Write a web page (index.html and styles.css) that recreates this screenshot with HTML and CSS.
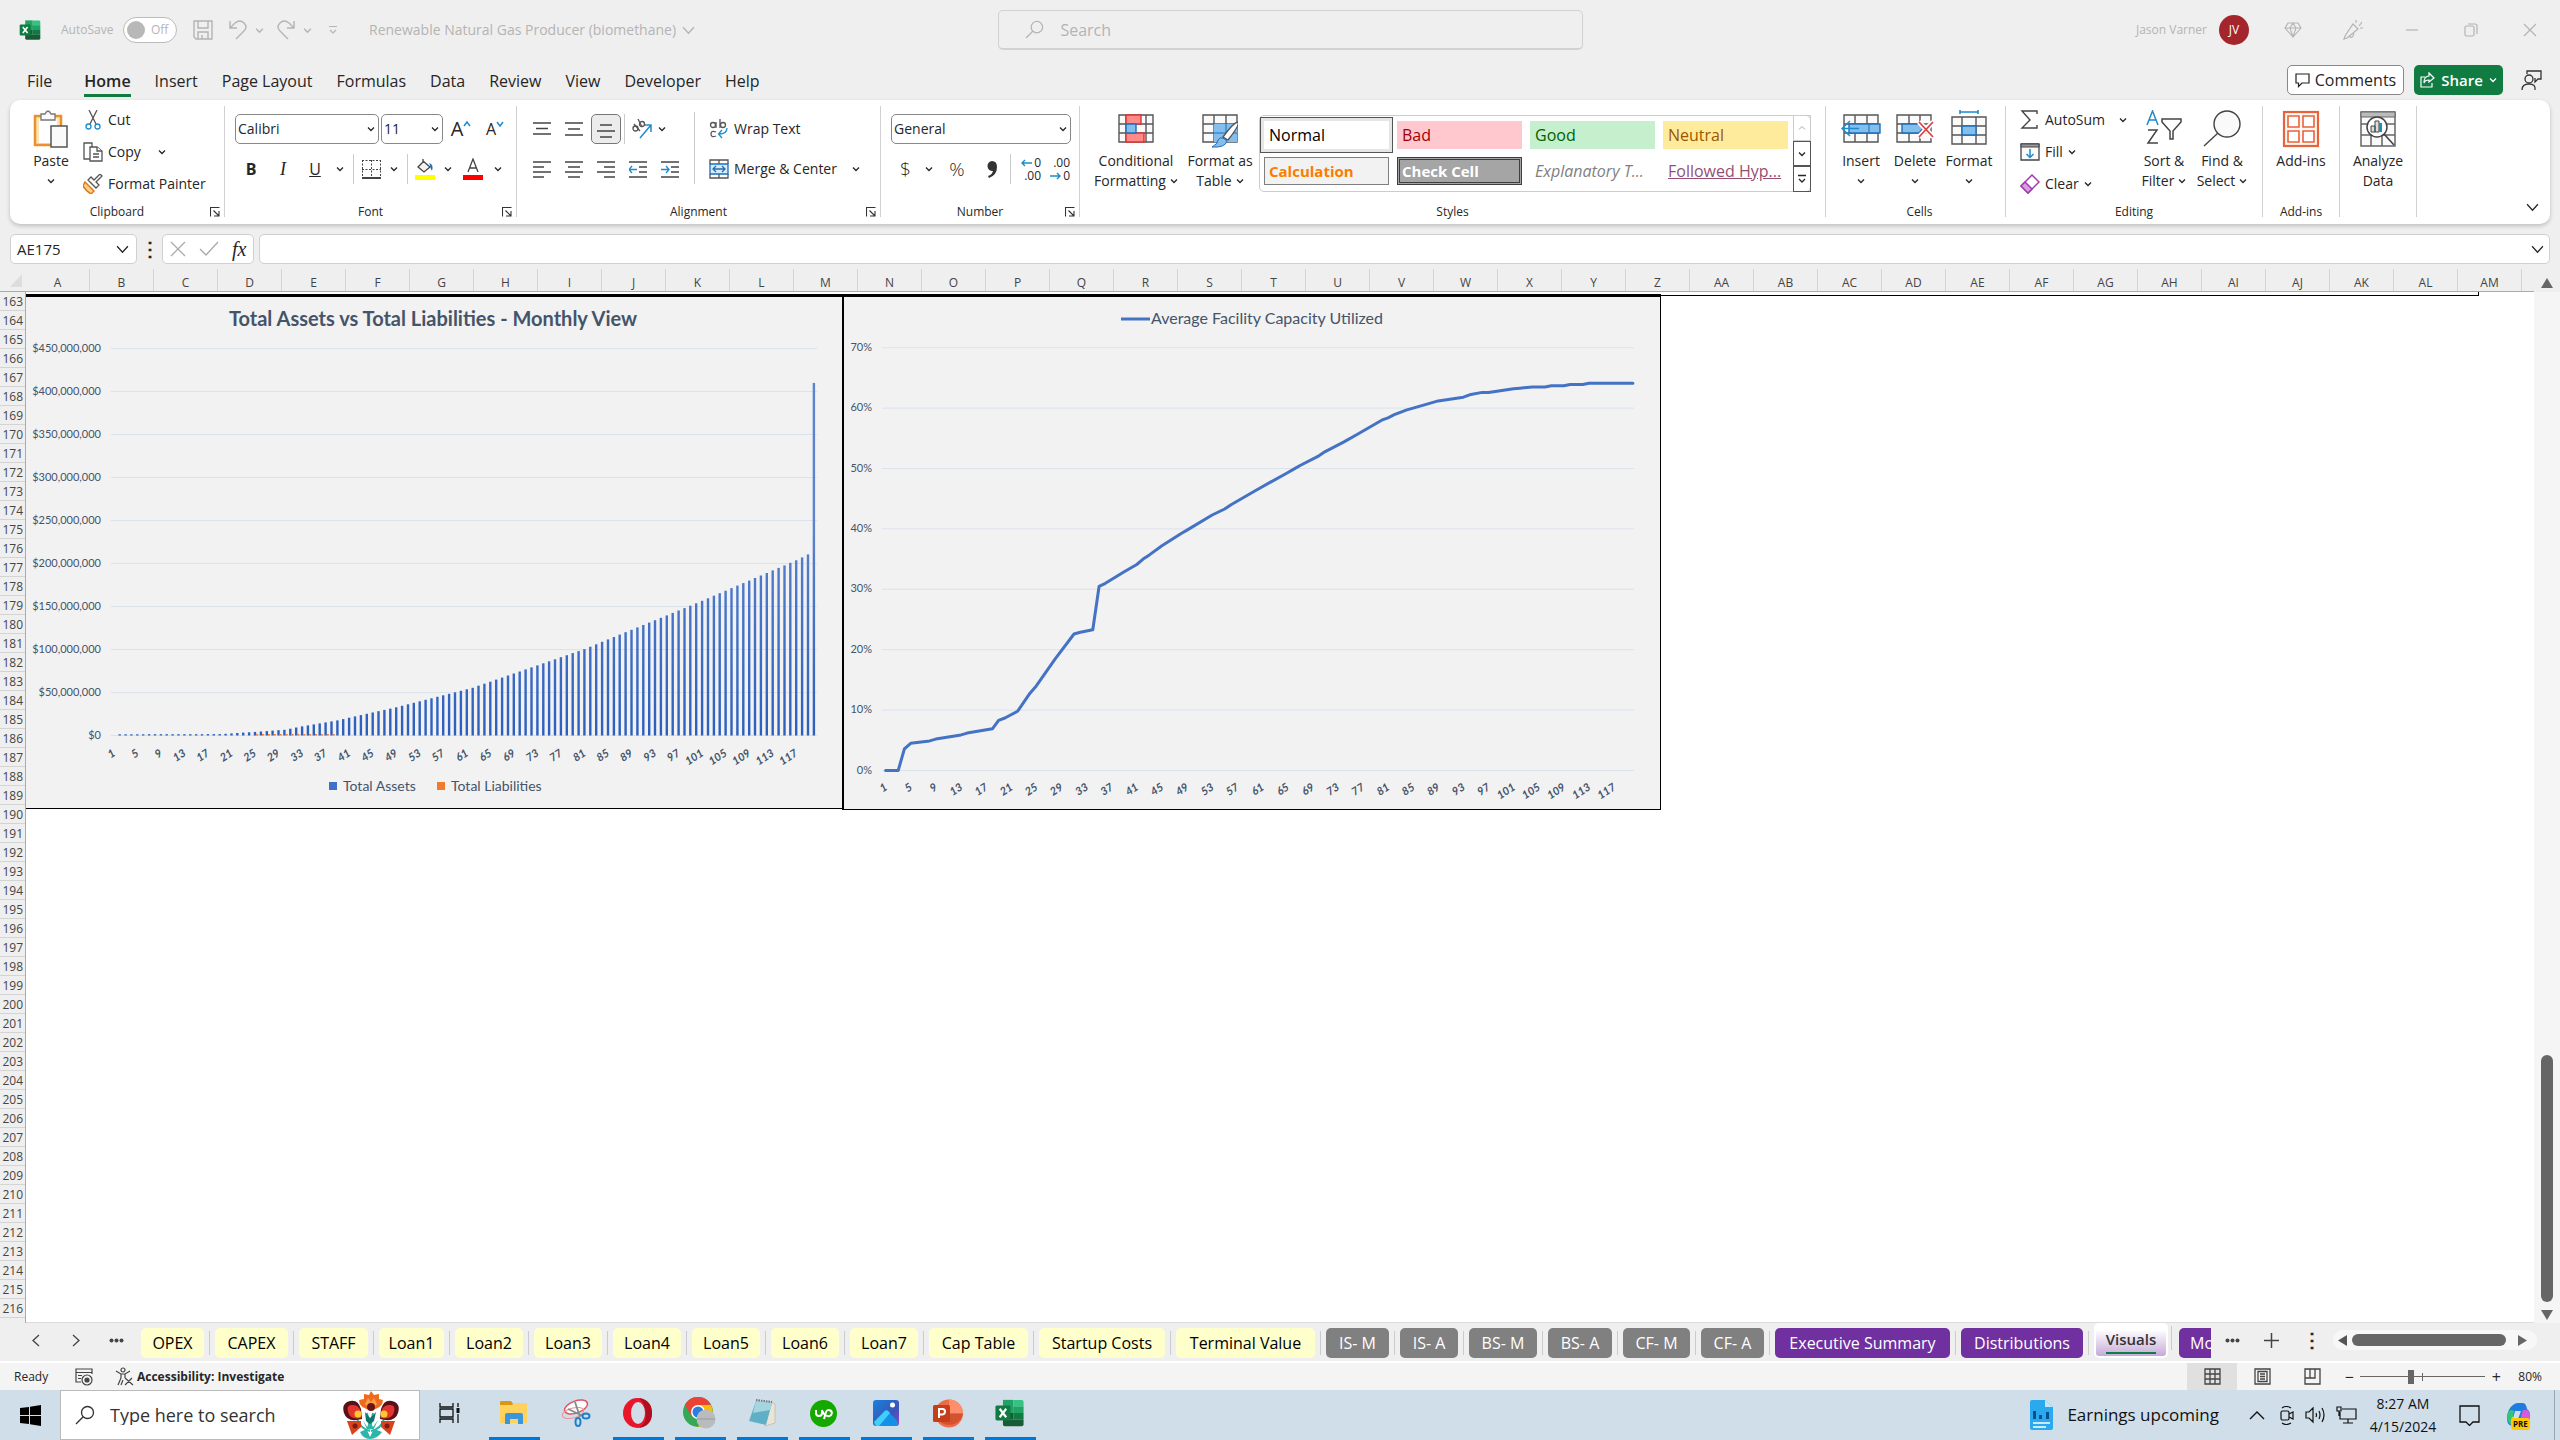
FILE: index.html
```html
<!DOCTYPE html>
<html lang="en">
<head>
<meta charset="utf-8">
<title>Renewable Natural Gas Producer (biomethane) - Excel</title>
<link rel="stylesheet" href="styles.css">
</head>
<body>
<svg class="defs" aria-hidden="true">
  <defs>
    <symbol id="chev" viewBox="0 0 8 8"><path d="M1 2.5 4 5.5 7 2.5" fill="none" stroke="currentColor" stroke-width="1.3"/></symbol>
    <symbol id="chev-l" viewBox="0 0 12 12"><path d="M1 3 6 8.500 11 3" fill="none" stroke="currentColor" stroke-width="1.2"/></symbol>
    <symbol id="launch" viewBox="0 0 10 10"><path d="M.5 9.500V.5H9.500M3.500 3.500 8.500 8.500M9 4V9H4" fill="none" stroke="#333" stroke-width="1.100"/></symbol>
    <symbol id="glass" viewBox="0 0 20 20"><circle cx="12.500" cy="7.500" r="6" fill="none" stroke="currentColor" stroke-width="1.300"/><path d="M8.200 11.800 1 19" stroke="currentColor" stroke-width="1.300"/></symbol>
    <symbol id="excel" viewBox="0 0 32 32">
      <path d="M9 2H20V16H9Z" fill="#21a366"/><path d="M20 2H29Q31 2 31 4V9H20Z" fill="#33c481"/><path d="M9 9H20V16H9Z" fill="#21a366"/><path d="M20 9H31V16H20Z" fill="#21a366"/><path d="M9 16H20V23H9Z" fill="#185c37"/><path d="M20 16H31V23H20Z" fill="#107c41"/><path d="M9 23H31V28Q31 30 29 30H11Q9 30 9 28Z" fill="#185c37"/>
      <rect x="1" y="8" width="16" height="16" rx="1.500" fill="#107c41"/><path d="M5.500 11.500 12.500 20.500M12.500 11.500 5.500 20.500" stroke="#fff" stroke-width="2.300"/>
    </symbol>
  </defs>
</svg>

<header class="titlebar">
  <svg class="app-icon"><use href="#excel"/></svg>
  <label class="autosave" for="autosave">AutoSave</label>
  <span class="toggle"><input type="checkbox" id="autosave"><span>Off</span></span>
  <button class="tb save" aria-label="Save"><svg width="20" height="20" viewBox="0 0 20 20" fill="none" stroke="currentColor" stroke-width="1.400"><path d="M1 1H19V19H3L1 17ZM5 1V8H15V1M5 19V12H15V19M9 15V19"/></svg></button>
  <button class="tb undo" aria-label="Undo"><svg width="20" height="20" viewBox="0 0 20 20" fill="none" stroke="currentColor" stroke-width="1.400"><path d="M2 1V8H9M2 8 7 3Q12-1 16 3T16 11L8 19"/></svg></button>
  <button class="tb tiny" aria-label="Undo list"><svg width="9" height="9"><use href="#chev"/></svg></button>
  <button class="tb undo redo" aria-label="Redo"><svg width="20" height="20" viewBox="0 0 20 20" fill="none" stroke="currentColor" stroke-width="1.400"><path d="M18 1V8H11M18 8 13 3Q8-1 4 3T4 11L12 19"/></svg></button>
  <button class="tb tiny" aria-label="Redo list"><svg width="9" height="9"><use href="#chev"/></svg></button>
  <button class="tb custom" aria-label="Customize toolbar"><svg width="10" height="10" viewBox="0 0 10 10" fill="none" stroke="currentColor" stroke-width="1.200"><path d="M1 1.500H9M2 5 5 8 8 5"/></svg></button>
  <button class="tb doc">Renewable Natural Gas Producer (biomethane) <svg width="13" height="13"><use href="#chev-l"/></svg></button>
  <label class="search"><svg width="19" height="19"><use href="#glass"/></svg><input type="text" placeholder="Search" aria-label="Search"></label>
  <div class="account">
    <span>Jason Varner</span><span class="avatar">JV</span>
    <button class="tb win" aria-label="Premium"><svg width="18" height="18" viewBox="0 0 18 18" fill="none" stroke="currentColor" stroke-width="1.100"><path d="M4 2H14L17 7 9 16 1 7ZM1 7H17M6 7 9 2 12 7 9 16Z"/></svg></button>
    <button class="tb win" aria-label="Coming soon"><svg width="20" height="20" viewBox="0 0 20 20" fill="none" stroke="currentColor" stroke-width="1.200"><path d="M10 4 15 9 4 18 1 19 2 16ZM6 16Q10 20 11 12M13 3V0M16 6 19 2M17 8H20"/></svg></button>
    <button class="tb win" aria-label="Minimize"><svg width="14" height="14" viewBox="0 0 14 14" fill="none" stroke="currentColor" stroke-width="1.200"><path d="M1 7H13"/></svg></button>
    <button class="tb win" aria-label="Restore"><svg width="14" height="14" viewBox="0 0 14 14" fill="none" stroke="currentColor" stroke-width="1.200"><rect x="1" y="3" width="9" height="10" rx="1.500"/><path d="M4 1H11Q13 1 13 3V11"/></svg></button>
    <button class="tb win" aria-label="Close"><svg width="14" height="14" viewBox="0 0 14 14" fill="none" stroke="currentColor" stroke-width="1.200"><path d="M1 1 13 13M13 1 1 13"/></svg></button>
  </div>
</header>

<nav class="menu">
  <a href="#file">File</a><a href="#home" class="on">Home</a><a href="#insert">Insert</a><a href="#layout">Page Layout</a><a href="#formulas">Formulas</a><a href="#data">Data</a><a href="#review">Review</a><a href="#view">View</a><a href="#developer">Developer</a><a href="#help">Help</a>
  <div class="menu-right">
    <button class="comments"><svg width="15" height="15" viewBox="0 0 15 15" fill="none" stroke="#222" stroke-width="1.200"><path d="M1 1H14V10H7L3.500 13.500V10H1Z"/></svg>Comments</button>
    <button class="share"><svg width="15" height="16" viewBox="0 0 15 16" fill="none" stroke="#fff" stroke-width="1.200"><path d="M5 5H1V15H12V11M9 1 14 6 9 10V8Q5 8 4 11Q4 4 9 4Z"/></svg>Share<svg width="8" height="8"><use href="#chev"/></svg></button>
    <button class="people" aria-label="Presence"><svg width="21" height="21" viewBox="0 0 21 21" fill="none" stroke="#333" stroke-width="1.300"><circle cx="8" cy="9" r="4"/><path d="M1 20Q1 14 8 14T14 20M6 4V1H20V9H17L14 12V8"/></svg></button>
  </div>
</nav>

<section class="ribbon">
  <div class="group clipboard">
    <div class="body">
      <button class="big paste"><svg width="36" height="38" viewBox="0 0 36 38"><rect x="2" y="6" width="26" height="29" fill="#fbe3b3" stroke="#e8912d" stroke-width="2.500"/><rect x="6" y="9" width="18" height="24" fill="#fff"/><path d="M8 4H12Q15-2 18 4H22V10H8Z" fill="#fafafa" stroke="#777" stroke-width="1.300"/><rect x="18" y="16" width="16" height="21" fill="#fafafa" stroke="#555" stroke-width="1.500"/></svg><span>Paste</span><svg class="c"><use href="#chev"/></svg></button>
      <div class="stack">
        <button><svg width="20" height="20" viewBox="0 0 20 20" fill="none" stroke="#555" stroke-width="1.300"><path d="M6 0 13 14M14 0 7 14"/><g stroke="#1e8bcd"><circle cx="5.500" cy="16.500" r="2.500"/><circle cx="14.500" cy="16.500" r="2.500"/></g></svg>Cut</button>
        <button><svg width="20" height="20" viewBox="0 0 20 20" fill="#fff" stroke="#555" stroke-width="1.300"><path d="M9 17H1V1H9V5"/><path d="M7 5H14L19 9V19H7Z"/><path d="M14 5V9H19M10 12H16M10 15H16"/></svg>Copy<svg class="c gap"><use href="#chev"/></svg></button>
        <button><svg width="20" height="20" viewBox="0 0 20 20"><path d="M2 8 11 17 8 20Q3 17 0 12Z" fill="#fbd28a" stroke="#e07b1a" stroke-width="1.500"/><path d="M5 6 13 14 16 11 13 8 19 2 17 0 11 6 8 3Z" fill="#fff" stroke="#555" stroke-width="1.300"/></svg>Format Painter</button>
      </div>
    </div>
    <div class="label">Clipboard<svg class="l"><use href="#launch"/></svg></div>
  </div>

  <div class="group font">
    <div class="rows">
      <div class="row"><button class="combo name">Calibri<svg class="c"><use href="#chev"/></svg></button><button class="combo size">11<svg class="c"><use href="#chev"/></svg></button><button class="t a1">A<svg width="8" height="8" viewBox="0 0 8 8"><path d="M1 6 4 2 7 6" fill="none" stroke="#1e8bcd" stroke-width="1.500"/></svg></button><button class="t a2">A<svg width="8" height="8" viewBox="0 0 8 8"><path d="M1 2 4 6 7 2" fill="none" stroke="#1e8bcd" stroke-width="1.500"/></svg></button></div>
      <div class="row"><button class="t"><b>B</b></button><button class="t"><i class="it">I</i></button><button class="t"><u>U</u></button><svg class="c w18"><use href="#chev"/></svg><span class="sep"></span>
        <button class="t n"><svg width="19" height="19" viewBox="0 0 19 19" fill="none" stroke="#444"><path d="M.5 0V18M9.500 0V18M18.500 0V18M0 .5H19M0 9.500H19" stroke-dasharray="2 1.500"/><path d="M0 18H19" stroke-width="2"/></svg></button><svg class="c w18"><use href="#chev"/></svg><span class="sep"></span>
        <button class="t n"><svg width="20" height="22" viewBox="0 0 20 22"><path d="M8 1V5M8 3 15 9 9 14 3 9 9 3" fill="#f4f4f4" stroke="#444" stroke-width="1.300"/><path d="M14 5Q19 6 17 13Q15 10 15 7Z" fill="#1e6fb8"/><rect y="17" width="20" height="5" fill="#ff0"/></svg></button><svg class="c w18"><use href="#chev"/></svg>
        <button class="t"><svg width="20" height="22" viewBox="0 0 20 22"><path d="M5 14 10 1 15 14M7 10H13" fill="none" stroke="#444" stroke-width="1.300"/><rect y="17" width="20" height="5" fill="#f00"/></svg></button><svg class="c w18"><use href="#chev"/></svg></div>
    </div>
    <div class="label">Font<svg class="l"><use href="#launch"/></svg></div>
  </div>

  <div class="group align">
    <div class="body">
      <div class="rows">
        <div class="row"><button class="t"><svg class="ln" viewBox="0 0 18 18"><path d="M0 3H18M3 8.500H15M0 14H18"/></svg></button><button class="t"><svg class="ln" viewBox="0 0 18 18"><path d="M0 3H18M3 9H15M0 15H18"/></svg></button><button class="t on"><svg class="ln" viewBox="0 0 18 18"><path d="M3 5H15M0 11H18M3 17H15"/></svg></button><span class="sep s4"></span><button class="t"><svg width="22" height="20" viewBox="0 0 22 20"><path d="M9 19 20 6M14 6H20V13" stroke="#1e8bcd" stroke-width="1.500" fill="none"/><g fill="none" stroke="#555" stroke-width="1.300"><circle cx="4.500" cy="9.500" r="2.500"/><path d="M3 5 9 12"/><circle cx="11" cy="5" r="2.500"/><path d="M7 0 11 8"/></g></svg></button><svg class="c"><use href="#chev"/></svg></div>
        <div class="row"><button class="t"><svg class="ln" viewBox="0 0 18 18"><path d="M0 2H18M0 7H11M0 12H18M0 17H11"/></svg></button><button class="t"><svg class="ln" viewBox="0 0 18 18"><path d="M0 2H18M3 7H15M0 12H18M3 17H15"/></svg></button><button class="t"><svg class="ln" viewBox="0 0 18 18"><path d="M0 2H18M7 7H18M0 12H18M7 17H18"/></svg></button><span class="sep s4"></span><button class="t"><svg class="ln" viewBox="0 0 18 18"><path d="M0 2H18M10 7H18M10 12H18M0 17H18"/><path d="M8 9.500H0M3 6 0 9.500 3 13" stroke="#1e8bcd"/></svg></button><button class="t"><svg class="ln" viewBox="0 0 18 18"><path d="M0 2H18M10 7H18M10 12H18M0 17H18"/><path d="M0 9.500H8M5 6 8 9.500 5 13" stroke="#1e8bcd"/></svg></button></div>
      </div>
      <div class="rows wrapcol">
        <div class="row"><button class="txt"><svg width="20" height="20" viewBox="0 0 20 20" fill="none" stroke="#555" stroke-width="1.300"><circle cx="4" cy="6" r="2.500"/><path d="M7 3V9M11 0V9"/><circle cx="14" cy="6" r="2.500"/><path d="M7 13Q2 11 2 15T7 17"/><path d="M18 9Q18 15 10 15M13 11 9.500 15 13 19" stroke="#1e8bcd"/></svg>Wrap Text</button></div>
        <div class="row"><button class="txt"><svg width="20" height="20" viewBox="0 0 20 20" fill="none" stroke="#555" stroke-width="1.300"><path d="M1 5V1H19V5M10 1V5M1 15V19H19V15M10 15V19"/><path d="M1 5H19V15H1Z" fill="#d8ebf9" stroke="#1e6fb8"/><path d="M4 10H16M7 7 4 10 7 13M13 7 16 10 13 13" stroke="#1e6fb8"/></svg>Merge &amp; Center<svg class="c mg"><use href="#chev"/></svg></button></div>
      </div>
    </div>
    <div class="label">Alignment<svg class="l"><use href="#launch"/></svg></div>
  </div>

  <div class="group number">
    <div class="rows">
      <div class="row"><button class="combo fmt">General<svg class="c"><use href="#chev"/></svg></button></div>
      <div class="row"><button class="t sym">$</button><svg class="c w18"><use href="#chev"/></svg><button class="t sym pc">%</button><button class="t"><svg width="12" height="17" viewBox="0 0 12 17"><path d="M6 0A5 5 0 1 0 7 10Q6 14 2 15L3 17Q11 14 11 6 11 0 6 0Z" fill="#333"/></svg></button><span class="sep s4"></span><button class="t dec"><span><svg class="ar" viewBox="0 0 11 8"><path d="M11 4H1M4 1 1 4 4 7"/></svg>0</span><span>.00</span></button><button class="t dec"><span>.00</span><span><svg class="ar" viewBox="0 0 11 8"><path d="M0 4H10M7 1 10 4 7 7"/></svg>0</span></button></div>
    </div>
    <div class="label">Number<svg class="l"><use href="#launch"/></svg></div>
  </div>

  <div class="group styles">
    <div class="body">
      <button class="big cf"><svg width="36" height="38" viewBox="0 0 36 38"><path d="M1 5H35V32H1Z M1 14H35M1 23H35M8 5V32M28 5V32" fill="#fafafa" stroke="#555" stroke-width="1.400"/><g stroke="#d33" fill="#ff8a8a" stroke-width="1.400"><path d="M8 5H23V14H8ZM8 23H26V32H8Z"/></g><path d="M8 14H18V23H8Z" fill="#83beec" stroke="#1e6fb8" stroke-width="1.400"/></svg><span>Conditional</span><span>Formatting <svg class="c"><use href="#chev"/></svg></span></button>
      <button class="big ft"><svg width="36" height="38" viewBox="0 0 36 38"><path d="M1 5H35V32H1Z M1 14H35M1 23H35M12 5V32M24 5V32" fill="#fafafa" stroke="#555" stroke-width="1.400"/><path d="M12 14H35V32H12Z" fill="#83beec"/><path d="M24 14V32M12 23H35" stroke="#1e6fb8"/><path d="M36 12Q38 15 26 30L21 27Q31 13 36 12Z" fill="#fff" stroke="#555" stroke-width="1.300"/><path d="M21 28 25 31Q23 38 10 37 16 34 16 30 18 27 21 28Z" fill="#83beec" stroke="#1e6fb8"/></svg><span>Format as</span><span>Table <svg class="c"><use href="#chev"/></svg></span></button>
      <div class="gallery">
        <div class="cells">
          <button class="st normal">Normal</button><button class="st bad">Bad</button><button class="st good">Good</button><button class="st neutral">Neutral</button>
          <button class="st calc">Calculation</button><button class="st check">Check Cell</button><button class="st expl">Explanatory T...</button><button class="st foll">Followed Hyp...</button>
        </div>
        <div class="scroll">
          <button class="off" aria-label="Up"><svg width="8" height="8" viewBox="0 0 8 8"><path d="M1 5.500 4 2.500 7 5.500" fill="none" stroke="currentColor"/></svg></button>
          <button aria-label="Down"><svg class="c"><use href="#chev"/></svg></button>
          <button aria-label="More"><svg width="8" height="10" viewBox="0 0 8 10"><path d="M0 1.500H8M1 5 4 8 7 5" fill="none" stroke="currentColor" stroke-width="1.300"/></svg></button>
        </div>
      </div>
    </div>
    <div class="label">Styles</div>
  </div>

  <div class="group cellsg">
    <div class="body">
      <button class="big"><svg width="40" height="38" viewBox="0 0 40 38"><path d="M3 5H37V32H3ZM3 14H37M3 23H37M14 5V32M26 5V32" fill="#fafafa" stroke="#555" stroke-width="1.400"/><path d="M8 14H39V23H8Z" fill="#83beec" stroke="#1e6fb8" stroke-width="1.400"/><path d="M18 18.500H2M9 11 1 18.500 9 26" fill="none" stroke="#1e8bcd" stroke-width="1.500"/><path d="M28 14V23" stroke="#1e6fb8"/></svg><span>Insert</span><svg class="c"><use href="#chev"/></svg></button>
      <button class="big"><svg width="40" height="38" viewBox="0 0 40 38"><path d="M2 5H36V32H2ZM2 14H36M2 23H36M14 5V32M25 5V32" fill="#fafafa" stroke="#555" stroke-width="1.400"/><path d="M7 14H24L28 18.500 24 23H7Z" fill="#83beec" stroke="#1e6fb8" stroke-width="1.400"/><path d="M24 12 38 27M38 12 24 27" stroke="#fff" stroke-width="5"/><path d="M24 12 38 27M38 12 24 27" stroke="#e04040" stroke-width="1.800"/></svg><span>Delete</span><svg class="c"><use href="#chev"/></svg></button>
      <button class="big"><svg width="40" height="38" viewBox="0 0 40 38"><path d="M3 7H37V34H3ZM3 16H37M3 25H37M13 7V34M27 7V34" fill="#fafafa" stroke="#555" stroke-width="1.400"/><path d="M13 16H27V25H13Z" fill="#83beec" stroke="#1e6fb8" stroke-width="1.400"/><path d="M11 2H29M11 0V4M29 0V4" stroke="#1e8bcd" stroke-width="1.600"/></svg><span>Format</span><svg class="c"><use href="#chev"/></svg></button>
    </div>
    <div class="label">Cells</div>
  </div>

  <div class="group editing">
    <div class="body">
      <div class="stack">
        <button><svg width="20" height="20" viewBox="0 0 20 20" fill="none" stroke="#444" stroke-width="1.400"><path d="M17 4V1H2L10 10 2 18H17V15"/></svg>AutoSum<svg class="c as"><use href="#chev"/></svg></button>
        <button><svg width="20" height="20" viewBox="0 0 20 20"><path d="M1 2H19V18H1Z" fill="#fafafa" stroke="#444" stroke-width="1.300"/><path d="M1 2H19V5H1Z" fill="#999" stroke="#444"/><path d="M10 7V15M6.500 12 10 15.500 13.500 12" fill="none" stroke="#1e8bcd" stroke-width="1.500"/></svg>Fill<svg class="c"><use href="#chev"/></svg></button>
        <button><svg width="20" height="20" viewBox="0 0 20 20"><path d="M12 1 19 8 8 19 1 12Z" fill="#fff" stroke="#a03bb0" stroke-width="1.500"/><path d="M5 8 12 15 8 19 1 12Z" fill="#d9a0e0" stroke="#a03bb0" stroke-width="1.500"/></svg>Clear<svg class="c"><use href="#chev"/></svg></button>
      </div>
      <button class="big sf"><svg width="38" height="38" viewBox="0 0 38 38" fill="none" stroke-width="1.500"><path d="M2 15 7.500 1 13 15M4 10H11" stroke="#1e8bcd"/><path d="M3 20H12L3 33H13M17 9H36V12L28 21V29H25V21L17 12Z" stroke="#444"/></svg><span>Sort &amp;</span><span>Filter <svg class="c"><use href="#chev"/></svg></span></button>
      <button class="big fs"><svg width="38" height="38" viewBox="0 0 38 38"><circle cx="24" cy="14" r="13" fill="#fafafa" stroke="#444" stroke-width="1.400"/><path d="M15 23 1 36" stroke="#444" stroke-width="1.400"/></svg><span>Find &amp;</span><span>Select <svg class="c"><use href="#chev"/></svg></span></button>
    </div>
    <div class="label">Editing</div>
  </div>

  <div class="group addins">
    <div class="body"><button class="big"><svg width="38" height="38" viewBox="0 0 38 38" fill="#fff" stroke="#e8633a"><rect x="2" y="2" width="34" height="34" stroke-width="2.200" fill="#fff7f3"/><path d="M6 6H17V17H6ZM21 6H32V17H21ZM6 21H17V32H6ZM21 21H32V32H21Z" stroke-width="1.600"/></svg><span>Add-ins</span></button></div>
    <div class="label">Add-ins</div>
  </div>

  <div class="group analyze">
    <div class="body"><button class="big"><svg width="38" height="38" viewBox="0 0 38 38"><path d="M2 2H36V36H2ZM2 14H36M2 25H36M12 25V36M23 25V36" fill="#fafafa" stroke="#666" stroke-width="1.500"/><path d="M2 2H36V7H2Z" fill="#bbb" stroke="#666"/><circle cx="18" cy="17" r="10" fill="#fff" stroke="#444" stroke-width="1.500"/><path d="M25 24 35 35" stroke="#444" stroke-width="1.600"/><path d="M12 16H16V22H12ZM16 11H20V22H16Z" fill="#ddd" stroke="#444"/><path d="M20 13H23V22H20Z" fill="#1e8bcd"/></svg><span>Analyze</span><span>Data</span></button></div>
    <div class="label"></div>
  </div>
  <button class="collapse" aria-label="Collapse ribbon"><svg width="13" height="13"><use href="#chev-l"/></svg></button>
</section>

<section class="formula">
  <button class="namebox">AE175<svg width="13" height="13"><use href="#chev-l"/></svg></button>
  <span class="dots">⋮</span>
  <div class="fx">
    <button aria-label="Cancel"><svg width="16" height="16" viewBox="0 0 16 16" fill="none" stroke="#aaa" stroke-width="1.300"><path d="M1 1 15 15M15 1 1 15"/></svg></button>
    <button aria-label="Enter"><svg width="20" height="16" viewBox="0 0 20 16" fill="none" stroke="#aaa" stroke-width="1.300"><path d="M1 8 7 14 19 1"/></svg></button>
    <button class="f" aria-label="Insert function">fx</button>
  </div>
  <div class="fbox"><input type="text" aria-label="Formula bar"><svg width="13" height="13"><use href="#chev-l"/></svg></div>
</section>

<main class="sheet">
  <div class="corner"><svg width="12" height="13" viewBox="0 0 12 13"><path d="M12 0V13H0Z" fill="#ddd"/></svg></div>
  <div class="cols" id="cols"></div>
  <div class="vtop"><svg width="12" height="10" viewBox="0 0 12 10"><path d="M6 0 12 10H0Z" fill="#666"/></svg></div>
  <div class="rowheads" id="rows"></div>
  <div class="canvas">
    <figure class="chart assets"><svg id="assets" width="816" height="511" viewBox="0 5 816 511" role="img" aria-label="Total Assets vs Total Liabilities"></svg></figure>
    <figure class="chart capacity"><svg id="capacity" width="816" height="512" viewBox="2 5 816 512" role="img" aria-label="Average Facility Capacity Utilized"></svg></figure>
    <div class="edge"></div>
  </div>
  <div class="vbar"><span class="thumb"></span><svg width="12" height="10" viewBox="0 0 12 10"><path d="M6 10 12 0H0Z" fill="#666"/></svg></div>
</main>

<section class="tabs">
  <div class="tabnav"><button aria-label="Previous"><svg width="8" height="13" viewBox="0 0 8 13"><path d="M7 1 1 6.500 7 12" fill="none" stroke="#444" stroke-width="1.300"/></svg></button><button aria-label="Next"><svg width="8" height="13" viewBox="0 0 8 13"><path d="M1 1 7 6.500 1 12" fill="none" stroke="#444" stroke-width="1.300"/></svg></button><button aria-label="All sheets"><svg width="15" height="5" viewBox="0 0 15 5" fill="#444"><circle cx="2.500" cy="2.500" r="2"/><circle cx="7.500" cy="2.500" r="2"/><circle cx="12.500" cy="2.500" r="2"/></svg></button></div>
  <div class="strip">
    <button class="y">OPEX</button><button class="y">CAPEX</button><button class="y">STAFF</button><button class="y">Loan1</button><button class="y">Loan2</button><button class="y">Loan3</button><button class="y">Loan4</button><button class="y">Loan5</button><button class="y">Loan6</button><button class="y">Loan7</button><button class="y">Cap Table</button><button class="y">Startup Costs</button><button class="y">Terminal Value</button><button class="g">IS- M</button><button class="g">IS- A</button><button class="g">BS- M</button><button class="g">BS- A</button><button class="g">CF- M</button><button class="g">CF- A</button><button class="p">Executive Summary</button><button class="p">Distributions</button><button class="act"><span>Visuals</span></button><button class="p cut">Mo</button>
  </div>
  <div class="tabend">
    <button aria-label="More sheets"><svg width="15" height="5" viewBox="0 0 15 5" fill="#444"><circle cx="2.500" cy="2.500" r="2"/><circle cx="7.500" cy="2.500" r="2"/><circle cx="12.500" cy="2.500" r="2"/></svg></button>
    <button aria-label="New sheet"><svg width="15" height="15" viewBox="0 0 15 15"><path d="M7.500 0V15M0 7.500H15" stroke="#444" stroke-width="1.500"/></svg></button>
    <span class="dots">⋮</span>
    <div class="hbar"><svg width="9" height="11" viewBox="0 0 9 11"><path d="M9 0V11L0 5.500Z" fill="#555"/></svg><span></span><svg width="9" height="11" viewBox="0 0 9 11"><path d="M0 0V11L9 5.500Z" fill="#666"/></svg></div>
  </div>
</section>

<section class="status">
  <span class="ready">Ready</span>
  <svg width="18" height="18" viewBox="0 0 18 18" fill="none" stroke="#444" stroke-width="1.200"><path d="M6 14H1V1H17V6M1 4.500H17M3 7.500H7M3 10.500H6"/><circle cx="12" cy="12" r="5"/><circle cx="12" cy="12" r="2" fill="#444"/></svg>
  <svg class="acc" width="19" height="19" viewBox="0 0 19 19" fill="none" stroke="#444" stroke-width="1.200"><circle cx="8" cy="3" r="2"/><path d="M1 4 6 7V11L3 18M15 4 10 7V11M6 7H10M6 18 8 13M10 11 18 18M17 11 10 18"/></svg>
  <b>Accessibility: Investigate</b>
  <div class="views">
    <button class="on" aria-label="Normal view"><svg width="17" height="17" viewBox="0 0 17 17" fill="none" stroke="#444" stroke-width="1.300"><path d="M1 1H16V16H1ZM1 6H16M1 11H16M6 1V16M11 1V16"/></svg></button>
    <button aria-label="Page layout"><svg width="17" height="17" viewBox="0 0 17 17" fill="none" stroke="#444" stroke-width="1.300"><path d="M1 1H16V16H1ZM4 3.500H13V13.500H4ZM6 6H11M6 8.500H11M6 11H11"/></svg></button>
    <button aria-label="Page break"><svg width="17" height="17" viewBox="0 0 17 17" fill="none" stroke="#444" stroke-width="1.300"><path d="M1 1H16V16H1ZM1 10H11V1M6 1V10"/></svg></button>
    <span class="pm">−</span><input class="zoom" type="range" min="0" max="100" value="40" aria-label="Zoom"><span class="pm">+</span><span class="pct">80%</span>
  </div>
</section>

<footer class="taskbar">
  <button class="start" aria-label="Start"><svg width="21" height="21" viewBox="0 0 21 21"><path d="M0 3 9 2V10H0ZM10 1.800 21 0V10H10ZM0 11H9V19L0 18ZM10 11H21V21L10 19.200Z"/></svg></button>
  <label class="tsearch"><svg width="20" height="20"><use href="#glass"/></svg><input type="text" placeholder="Type here to search" aria-label="Type here to search">
    <svg width="56" height="48" viewBox="0 0 56 48"><path d="M24 22 27 38 30 22M27 40Q18 38 14 28M28 40Q38 38 41 28" stroke="#25b5a5" stroke-width="2" fill="none"/><path d="M20 29 27 46 35 29 30 36 27 30 24 36ZM17 41Q27 35 39 41 34 48 27 48T17 41Z" fill="#2cb5a8"/><path d="M28 19Q16 17 16 9L21 8 21 3 26 4 28 0 31 4 36 3 36 8 40 9Q40 17 28 19Z" fill="#ee6a1c"/><path d="M22 13 25 7 28 11 31 7 34 13 28 19Z" fill="#f7a04a"/><circle cx="28" cy="16" r="4" fill="#6d1414"/><path d="M19 28Q4 32 1 22T7 10Q15 8 18 18Z" fill="#5a1018"/><path d="M37 28Q52 32 55 22T49 10Q41 8 38 18Z" fill="#5a1018"/><path d="M18 27Q7 29 5 21T10 14Q16 14 18 21ZM38 27Q49 29 51 21T46 14Q40 14 38 21Z" fill="#e2362c"/><circle cx="15" cy="23" r="3.500" fill="#ffc72e"/><circle cx="41" cy="23" r="3.500" fill="#ffc72e"/><path d="M4 30 18 30 18 36 9 44ZM52 30 38 30 38 36 47 44Z" fill="#d8421c"/><circle cx="12" cy="35" r="2.500" fill="#7d1a14"/><circle cx="44" cy="35" r="2.500" fill="#7d1a14"/><path d="M22 21 27 27 33 21 31 30 27 33 23 30Z" fill="#12756c"/></svg></label>
  <div class="apps">
    <button class="tv" aria-label="Task view"><svg width="22" height="20" viewBox="0 0 22 20" fill="none" stroke="#111" stroke-width="1.300"><path d="M1 0V4H14V0M1 20V16H14V20M1 6H14V14H1ZM19 0V4M19 11V20"/><path d="M19 5V10" stroke-width="3"/></svg></button>
    <button class="run" aria-label="File Explorer"><svg width="28" height="26" viewBox="0 0 28 26"><path d="M0 2Q0 1 1 1H11L14 5H0Z" fill="#d9980f"/><path d="M0 5H12L14 3H27V22Q27 23 26 23H1Q0 23 0 22Z" fill="#ffd25e"/><path d="M5 24V15Q5 13 7 13H21Q23 13 23 15V24H18V19H10V24Z" fill="#3b96dc"/></svg></button>
    <button aria-label="Snip"><svg width="30" height="28" viewBox="0 0 30 28" fill="none"><ellipse cx="15" cy="8" rx="12" ry="6" transform="rotate(-20 15 8)" fill="#fff" stroke="#e05560" stroke-width="1.500"/><ellipse cx="12" cy="14" rx="11" ry="5" transform="rotate(-15 12 14)" stroke="#e8949a"/><path d="M14 3 19 18M7 10 22 17" stroke="#888" stroke-width="1.800"/><g stroke="#1f7fc8" stroke-width="2"><ellipse cx="17" cy="23" rx="2.500" ry="4"/><ellipse cx="25" cy="17" rx="3.500" ry="2.500"/></g></svg></button>
    <button class="run" aria-label="Opera"><svg width="29" height="30" viewBox="0 0 29 30"><path d="M14.500 0A14.500 15 0 1 0 14.500 30 14.500 15 0 1 0 14.500 0ZM15 4A7 11 0 1 1 15 26 7 11 0 1 1 15 4Z" fill="#e8152b" fill-rule="evenodd"/><path d="M16 0Q29 2 29 15T16 30Q24 25 23 15T16 0Z" fill="#b00d20"/></svg></button>
    <button class="run" aria-label="Chrome"><svg width="33" height="32" viewBox="0 0 33 32"><circle cx="15" cy="15" r="15" fill="#34a853"/><path d="M2 7.500 8.500 19 15 9 28 7.500A15 15 0 0 0 2 7.500Z" fill="#ea4335"/><path d="M15 8H28A15 15 0 0 1 15 30L22 18Z" fill="#fbbc05"/><circle cx="15" cy="15" r="7" fill="#fff"/><circle cx="15" cy="15" r="5.500" fill="#2a7de1"/><circle cx="23" cy="22" r="9.500" fill="#b9bcbe"/><path d="M14 22H32" stroke="#999"/></svg></button>
    <button class="run" aria-label="Notepad"><svg width="30" height="28" viewBox="0 0 30 28"><path d="M24 3 28 5 28 24 18 27Z" fill="#e8e4d8" stroke="#b9ae94" stroke-width=".6"/><path d="M9 2 25 4 19 26 2 22Z" fill="#5fb0c4"/><path d="M9 2 25 4 23 11 6 14Z" fill="#a4d6e2"/><path d="M9 1 25 3" stroke="#777" stroke-width="2" stroke-dasharray="1.500 1"/></svg></button>
    <button class="run" aria-label="Upwork"><svg width="27" height="27" viewBox="0 0 27 27"><circle cx="13.500" cy="13.500" r="13.500" fill="#14a800"/><path d="M6 10V13Q6 16 9 16T12 13V10Q14 16 18 16A3 3 0 1 0 16 12L14 19" fill="none" stroke="#fff" stroke-width="2"/></svg></button>
    <button class="run" aria-label="Photos"><svg width="26" height="26" viewBox="0 0 26 26"><defs><linearGradient id="ph" x2="1" y2="1"><stop stop-color="#1683dd"/><stop offset=".6" stop-color="#3a55b8"/><stop offset="1" stop-color="#8a4ac0"/></linearGradient></defs><rect width="26" height="26" rx="3" fill="url(#ph)"/><path d="M1 22 11 11Q13 9 15 11L25 22Q25 26 22 26H3Q1 26 1 22Z" fill="#1590e8"/><path d="M1 22 12 11Q14 9 17 13L6 26H3Z" fill="#3fd0fa"/><circle cx="19.500" cy="5" r="2.500" fill="#fff"/></svg></button>
    <button class="run" aria-label="PowerPoint"><svg width="30" height="29" viewBox="0 0 30 29"><circle cx="16" cy="14.500" r="14" fill="#ed6c47"/><path d="M16 .5A14 14 0 0 1 30 14.500H16Z" fill="#ff8f6b"/><path d="M2.500 14.500H30A14 14 0 0 1 2.500 14.500Z" fill="#d35230"/><rect y="6" width="17" height="17" rx="1.500" fill="#c43e1c"/><path d="M6 19V10H9.500Q12 10 12 12.500T9.500 15.500H6" fill="none" stroke="#fff" stroke-width="2"/></svg></button>
    <button class="run" aria-label="Excel"><svg width="31" height="30"><use href="#excel"/></svg></button>
  </div>
  <div class="tray">
    <a href="#news" class="news"><svg width="23" height="30" viewBox="0 0 23 30"><path d="M2 0H15L23 7V28Q23 30 21 30H2Q0 30 0 28V2Q0 0 2 0Z" fill="#2aa9ee"/><path d="M15 0V7H23Z" fill="#bfe6fb"/><path d="M3 11H6V19H3ZM9 15H12V19H9ZM16 12H19V19H16Z" fill="#0b4f92"/><path d="M3 23H20M3 27H16" stroke="#fff" stroke-width="1.500"/></svg>Earnings upcoming</a>
    <svg width="16" height="9" viewBox="0 0 16 9" class="ic1"><path d="M1 8 8 1 15 8" fill="none" stroke="#111" stroke-width="1.400"/></svg>
    <svg width="16" height="19" viewBox="0 0 16 19" fill="none" stroke="#111" stroke-width="1.200"><rect x="2" y="5" width="8" height="9" rx="1.500"/><path d="M10 8 14 6V13L10 11M3 2Q7-1 12 2M3 17Q7 20 12 17"/></svg>
    <svg width="21" height="18" viewBox="0 0 21 18" fill="none" stroke="#111" stroke-width="1.200"><path d="M1 6H4L8 2V16L4 12H1ZM11 7Q12 9 11 11M14 5Q16 9 14 13M17 2Q21 9 17 16"/></svg>
    <svg width="21" height="18" viewBox="0 0 21 18" fill="none" stroke="#111" stroke-width="1.200"><path d="M6 3H20V13H4V6M12 13V17M7 17H17M1 1H5V5H1ZM3 5V10"/></svg>
    <div class="clock"><span>8:27 AM</span><span>4/15/2024</span></div>
    <svg width="21" height="21" viewBox="0 0 21 21" fill="none" stroke="#111" stroke-width="1.300" class="note"><path d="M1 1H20V17H14L10.500 20.500 7 17H1Z"/></svg>
    <span class="copilot"><svg width="25" height="24" viewBox="0 0 25 24"><path d="M7 2Q9 0 12 0H17Q20 0 21 6L23 8Q25 12 23 18L17 23H7Q1 23 1 15 2 5 7 2Z" fill="#1e7be0"/><path d="M1 12Q3 5 8 8L6 22Q1 20 1 12Z" fill="#35c27c"/><path d="M6 14H12L10 23H7Q3 21 6 14Z" fill="#f5c518"/><path d="M17 7H21Q26 10 23 18L18 23H12Z" fill="#d65bd8"/><path d="M9 8H15L12 16H7Z" fill="#d0dde8"/></svg><em>PRE</em></span>
    <span class="desk"></span>
  </div>
</footer>
<script src="sheet.js"></script>
</body>
</html>
```
FILE: styles.css
```css
* { box-sizing: border-box; }
body { margin: 0; height: 100vh; display: flex; flex-direction: column; overflow: hidden; background: #efefef; color: #262626; font: 14px/20px "Open Sans", "Noto Sans", sans-serif; }
button, input { font: inherit; color: inherit; background: none; border: 0; padding: 0; margin: 0; }
button { display: flex; align-items: center; justify-content: center; flex: none; white-space: nowrap; }
a { color: inherit; text-decoration: none; }
svg { display: block; flex: none; }
.defs { position: absolute; width: 0; height: 0; }
.c { width: 8px; height: 8px; }

.titlebar { height: 60px; flex: none; display: flex; align-items: center; position: relative; color: #b4b4b4; padding-left: 19px; }
.app-icon { width: 22px; height: 22px; }
.autosave { margin-left: 20px; width: 62px; font-size: 12px; }
.toggle { width: 54px; height: 26px; border: 1px solid #bbb; border-radius: 13px; background: #fff; display: flex; align-items: center; gap: 6px; padding-left: 3px; font-size: 12px; }
.toggle input { appearance: none; width: 18px; height: 18px; border-radius: 50%; background: #b8b8b8; }
.save { margin-left: 16px; width: 20px; }
.undo { margin-left: 15px; width: 20px; }
.redo { margin-left: 11px; }
.tiny { margin-left: 5px; width: 12px; }
.custom { margin-left: 13px; width: 14px; }
.doc { margin-left: 29px; gap: 6px; font-size: 14px; }
.search { position: absolute; left: 39%; width: 585px; height: 40px; border: 1px solid #d2d2d2; border-bottom-width: 2px; border-radius: 5px; display: flex; align-items: center; gap: 16px; padding-left: 26px; font-size: 16px; }
.search input { flex: 1; outline: 0; }
input::placeholder { color: inherit; opacity: 1; }
.account { margin-left: auto; display: flex; align-items: center; font-size: 12px; padding-right: 1px; }
.avatar { width: 30px; height: 30px; margin: 0 14px 0 12px; border-radius: 50%; background: #a4262c; color: #fff; text-align: center; line-height: 30px; }
.win { width: 60px; }
.win + .win { width: 59px; }

.menu { height: 40px; flex: none; display: flex; align-items: flex-start; gap: 24px; padding: 9px 10px 0 27px; font-size: 16px; line-height: 24px; }
.menu a { height: 28px; }
.menu a.on { font-weight: 600; border-bottom: 3px solid #107c41; margin-left: 8px; }
.menu-right { margin: -4px 0 0 auto; display: flex; gap: 10px; }
.menu-right button { height: 30px; border-radius: 5px; }
.menu-right .comments { width: 117px; border: 1px solid #888; background: #fff; gap: 5px; }
.share { width: 89px; background: #107c41; color: #fff; gap: 6px; font-weight: 600; font-size: 15px; }
.people { width: 37px; }

.ribbon { height: 124px; flex: none; margin: 0 10px; background: #fff; border-radius: 10px; box-shadow: 0 2px 4px #0003; display: flex; padding-top: 6px; }
.group { height: 111px; border-right: 1px solid #d0d0d0; display: flex; flex-direction: column; justify-content: space-between; flex: none; }
.body { display: flex; }
.label { height: 18px; display: flex; justify-content: center; align-items: center; position: relative; font-size: 12px; margin-bottom: -4px; }
.l { position: absolute; right: 4px; bottom: 4px; width: 10px; height: 10px; }
.big { flex-direction: column; justify-content: flex-start; height: 86px; padding-top: 4px; line-height: 20px; }
.big > svg:first-child { margin-bottom: 3px; }
.big > .c { margin-top: 6px; }
.big span { display: flex; align-items: center; gap: 4px; }
.stack { display: flex; flex-direction: column; margin-top: -2px; }
.stack button { height: 32px; justify-content: flex-start; gap: 5px; }
.clipboard { width: 215px; }
.paste { width: 52px; margin: 0 6px 0 15px; }
.gap { margin-left: 12px; }
.rows { display: flex; flex-direction: column; gap: 10px; padding-top: 8px; }
.row { display: flex; align-items: center; height: 30px; }
.font { width: 292px; }
.font .rows { padding-left: 10px; }
.combo { height: 30px; border: 1px solid #888; border-radius: 5px; justify-content: space-between; padding: 0 3px 0 2px; }
.name { width: 144px; margin-right: 2px; }
.size { width: 62px; }
.t { width: 32px; height: 30px; font-size: 16px; }
.n { width: 28px; }
.a1, .a2 { align-items: center; font-size: 20px; margin-left: 2px; }
.a2 { font-size: 16px; }
.a1 svg, .a2 svg { margin-bottom: 10px; }
.it { font-family: "Liberation Serif", serif; font-size: 18px; }
.w18 { width: 18px; }
.sep { width: 8px; height: 30px; background: linear-gradient(#ccc, #ccc) center / 1px 100% no-repeat; }
.s4 { width: 4px; }
.t.on { border: 1px solid #777; border-radius: 5px; background: #ececec; width: 30px; margin: 0 1px; }
.ln { width: 18px; height: 18px; fill: none; stroke: #444; stroke-width: 1.3; }
.align { width: 364px; }
.align .rows { padding-left: 9px; }
.align .wrapcol { margin: 6px 0 0 15px; padding: 2px 0 0 14px; border-left: 1px solid #ccc; }
.align .body > .rows:first-child { width: 162px; }
.txt { gap: 5px; font-size: 14px; }
.mg { margin-left: 10px; }
.number { width: 199px; }
.number .rows { padding-left: 10px; }
.fmt { width: 180px; }
.sym { font-size: 19px; font-weight: 300; width: 29px; }
.pc { width: 38px; }
.dec { flex-direction: column; align-items: flex-end; font-size: 12px; line-height: 13px; width: 24px; margin-left: 5px; }
.dec span { display: flex; align-items: center; gap: 2px; }
.ar { width: 11px; height: 8px; fill: none; stroke: #1e8bcd; stroke-width: 1.4; }
.styles { width: 746px; }
.cf { width: 92px; margin-left: 10px; }
.ft { width: 76px; }
.gallery { display: flex; width: 552px; height: 77px; margin: 9px 0 0 1px; border: 1px solid #ccc; border-radius: 5px; }
.cells { flex: 1; display: grid; grid-template-columns: repeat(4, 125px); grid-auto-rows: 28px; gap: 8px; padding: 5px 4px; }
.st { justify-content: flex-start; padding: 0 5px; font-size: 16px; height: 28px; }
.normal { outline: 1px solid #555; outline-offset: 3px; color: #000; box-shadow: 0 0 0 3px #e6e6e6; background: #fff; }
.bad { background: #ffc7ce; color: #9c0006; }
.good { background: #c6efce; color: #006100; }
.neutral { background: #ffeb9c; color: #9c5700; }
.calc { background: #f2f2f2; color: #fa7d00; border: 1px solid #7f7f7f; font-weight: 700; font-size: 15px; padding: 0 4px; }
.check { background: #a5a5a5; color: #fff; border: 3px double #3f3f3f; font-weight: 700; padding: 0 2px; font-size: 15px; }
.expl { color: #7f7f7f; font-style: italic; }
.foll { color: #954f72; text-decoration: underline; }
.scroll { width: 18px; margin: -1px; display: flex; flex-direction: column; }
.scroll button { flex: 1; border: 1px solid #555; }
.scroll .off { border-color: #ccc; color: #aaa; }
.cellsg { width: 180px; padding-left: 8px; }
.cellsg .big { width: 54px; }
.editing { width: 257px; }
.editing .stack { width: 114px; margin-left: 14px; }
.as { margin-left: 9px; }
.sf { width: 60px; }
.fs { width: 56px; }
.addins, .analyze { width: 77px; }
.addins .big, .analyze .big { width: 76px; }
.collapse { margin: auto 11px 10px auto; }

.formula { height: 45px; flex: none; display: flex; align-items: flex-start; padding: 10px 10px 0; }
.namebox, .fx, .fbox { height: 30px; border: 1px solid #d0d0d0; border-radius: 5px; background: #fff; }
.namebox { width: 127px; justify-content: space-between; padding: 0 7px 0 6px; font-size: 15px; }
.formula .dots { width: 25px; }
.dots { line-height: 30px; text-align: center; font-size: 20px; font-weight: 700; }
.fx { width: 92px; display: flex; align-items: center; justify-content: space-around; margin-right: 5px; }
.f { font: italic 20px "Liberation Serif", serif; }
.fbox { flex: 1; display: flex; align-items: center; padding-right: 5px; }
.fbox input { flex: 1; outline: 0; }

.sheet { flex: 1; min-height: 0; display: grid; grid-template: 23px minmax(0, 1fr) / 26px minmax(0, 1fr) 26px; }
.corner { display: flex; align-items: center; justify-content: flex-end; padding-right: 4px; border-bottom: 1px solid #ababab; }
.cols { display: flex; overflow: hidden; border-bottom: 1px solid #ababab; }
.cols span { width: 64px; flex: none; text-align: center; font-size: 12px; line-height: 28px; border-right: 1px solid #d4d4d4; color: #444; }
.vtop { display: flex; align-items: center; justify-content: center; padding-top: 4px; }
.rowheads { overflow: hidden; border-right: 1px solid #ababab; font-size: 12px; color: #444; }
.rowheads span { display: block; height: 19px; line-height: 20px; border-bottom: 1px solid #d4d4d4; text-align: right; padding-right: 2px; }
.canvas { background: #fff; display: flex; align-items: flex-start; overflow: hidden; border-bottom: 1px solid #dcdcdc; }
.chart { margin: 0; flex: none; background: #f2f2f2; margin-top: 2px; border-top: 3px solid #000; border-bottom: 1px solid #000; }
.capacity { border-left: 2px solid #000; border-right: 1px solid #000; }
.edge { width: 818px; height: 4px; border: solid #000; border-width: 0 1px 1px 0; }
.vbar { display: flex; flex-direction: column; align-items: center; padding: 0 0 3px; background: #f5f5f5; }
.thumb { width: 12px; height: 24%; border-radius: 6px; background: #666; margin: auto 0 8px; }
.chart text { font-family: Lato, sans-serif; fill: #44546a; }
.chart .title { font-size: 20px; font-weight: 700; }
.chart .series { font-size: 16px; }
.chart .key { font-size: 14px; }
.chart .axis { font-size: 11px; }
.chart .cat { font-size: 11px; font-weight: 700; font-style: italic; }

.tabs { height: 40px; flex: none; display: flex; font-size: 16px; border-bottom: 2px solid #fff; }
.tabnav { width: 136px; display: flex; align-items: center; padding: 0 0 3px 16px; }
.tabnav button { width: 40px; }
.strip { flex: 1; min-width: 0; overflow: hidden; display: grid; grid-template-columns: 63px 73px 69px 65px repeat(6, 68px) 99px 126px 139px 63px 58px 68px 64px 67px 63px 175px 122px 74px 32px; column-gap: 11px; padding: 5px 0 5px 5px; }
.strip button { height: 30px; border-radius: 5px; color: #000; position: relative; }
.strip button::after { content: ""; position: absolute; right: -6px; top: 3px; width: 1px; height: 24px; background: #ccc; }
.strip .y { background: #ffffcc; }
.strip .g { background: #808080; color: #fff; }
.strip .p { background: #7030a0; color: #fff; }
.strip .cut { justify-content: flex-start; overflow: hidden; border-radius: 5px 0 0 5px; padding-left: 11px; }
.strip .act { margin-top: -5px; height: 35px; background: linear-gradient(#fff 20%, #c5abd9); border: 2px solid #fff; border-top: 0; color: #333; font-weight: 600; font-size: 15px; }
.act span { border-bottom: 2px solid #107c41; line-height: 26px; }
.tabend { width: 346px; display: flex; align-items: center; padding-bottom: 4px; }
.tabend button { width: 40px; }
.tabend button:first-child { width: 37px; }
.tabend .dots { width: 42px; }
.hbar { width: 204px; height: 20px; border-radius: 10px; background: #f7f7f7; display: flex; align-items: center; gap: 5px; padding: 0 8px 0 5px; }
.hbar span { width: 154px; height: 12px; border-radius: 6px; background: #666; margin-right: 7px; }

.status { height: 27px; flex: none; display: flex; align-items: center; background: #f4f4f4; font-size: 12px; padding-left: 14px; }
.ready { width: 61px; }
.acc { margin: 0 3px 0 22px; }
.views { margin-left: auto; display: flex; align-items: center; padding-right: 18px; }
.views button { width: 50px; height: 27px; }
.views .on { background: #e0e0e0; }
.pm { width: 16px; text-align: center; font-size: 16px; }
.views button + .pm { margin-left: 4px; }
.zoom { appearance: none; width: 125px; height: 16px; margin: 0 3px; background: linear-gradient(#666, #666) center / 100% 1px no-repeat, linear-gradient(#666, #666) center / 1px 8px no-repeat; }
.zoom::-webkit-slider-thumb { appearance: none; width: 6px; height: 14px; background: #666; }
.pct { margin-left: 14px; }

.taskbar { height: 50px; flex: none; display: flex; background: #d0dee9; color: #111; }
.start { width: 60px; }
.tsearch { width: 360px; background: #fff; border: 1px solid #bbb; display: flex; align-items: center; gap: 15px; padding: 0 20px 0 14px; font-size: 18px; color: #333; }
.tsearch input { flex: 1; min-width: 0; outline: 0; }
.apps { display: flex; gap: 11px; padding-left: 7px; }
.apps button { width: 51px; height: 50px; border-bottom: 3px solid transparent; padding: 0 2px 1px 0; }
.apps .run { border-color: #0078d7; }
.apps .tv { padding-right: 6px; }
.tray { margin-left: auto; display: flex; align-items: center; gap: 10px; padding-right: 1px; }
.news { display: flex; align-items: center; gap: 14px; font-size: 17px; margin-right: 20px; }
.ic1 { margin-right: 4px; }
.clock { display: flex; flex-direction: column; align-items: center; line-height: 23px; width: 72px; white-space: nowrap; }
.note { margin: 0 16px 0 10px; }
.copilot { position: relative; }
.copilot em { position: absolute; left: 5px; bottom: -3px; background: #ffc800; border-radius: 3px; font: 700 8px/12px "Open Sans", sans-serif; padding: 0 2px; }
.desk { width: 5px; height: 50px; border-left: 1px solid #9aa7b3; margin-left: 13px; }
```
FILE: sheet.js
```js
const letters = [...Array(40).keys()].map(i => i < 26 ? String.fromCharCode(65 + i) : "A" + String.fromCharCode(39 + i));
document.getElementById("cols").innerHTML = letters.map((c, i) => `<span>${i < 39 ? c : ""}</span>`).join("");
document.getElementById("rows").innerHTML = [...Array(54).keys()].map(i => `<span>${163 + i}</span>`).join("");

// Straight-line interpolation between known [month, value] pairs.
function at(points, m) {
  const k = points.findIndex(p => p[0] >= m);
  if (points[k][0] === m || k === 0) return points[k][1];
  const [a, b] = [points[k - 1], points[k]];
  return a[1] + (b[1] - a[1]) * (m - a[0]) / (b[0] - a[0]);
}
const line = (x1, x2, y) => `<path d="M${x1} ${y}H${x2}" stroke="#dbe2ec" stroke-width="1"/>`;
function months(x0, step, y) {
  let s = "";
  for (let m = 1; m < 120; m += 4) {
    const x = (x0 + (m - 1) * step).toFixed(1);
    s += `<text class="cat" text-anchor="end" transform="translate(${x} ${y}) rotate(-33)">${m}</text>`;
  }
  return s;
}

const assets = [[2, 1.4], [19, 1.6], [25, 4.2], [30, 6.6], [33, 10.6], [39, 17.6], [49, 32.8], [62, 55.5], [81, 100.5], [100, 153.7], [117, 203.7], [119, 210.6], [120, 410]];
let a = `<defs><linearGradient id="bar" gradientUnits="userSpaceOnUse" x1="0" y1="230" x2="0" y2="443"><stop stop-color="#5b83cf"/><stop offset="1" stop-color="#2c5fbd"/></linearGradient></defs>`;
a += `<text class="title" x="407" y="34" text-anchor="middle">Total Assets vs Total Liabilities - Monthly View</text>`;
for (let v = 0; v <= 450; v += 50) {
  const y = 443.5 - v * 0.86;
  a += line(85, 791, y) + `<text class="axis" x="75" y="${y + 3}" text-anchor="end">$${v ? v + ",000,000" : 0}</text>`;
}
for (let m = 2; m <= 120; m++) {
  const h = at(assets, m) * 0.86;
  const x = 85 + (m - 1) * 5.883 + 1.6;
  a += `<rect x="${x.toFixed(1)}" y="${(443.5 - h).toFixed(1)}" width="2.400" height="${h.toFixed(1)}" fill="url(#bar)"/>`;
  if (m > 24 && m < 39) a += `<rect x="${(x + 2.4).toFixed(1)}" y="442" width="2" height="1.500" fill="#f07b2e"/>`;
}
a += months(90, 5.883, 463);
a += `<rect x="303" y="490" width="8" height="8" fill="#3f6fc6"/><text class="key" x="317" y="499">Total Assets</text><rect x="411" y="490" width="8" height="8" fill="#f07b2e"/><text class="key" x="425" y="499">Total Liabilities</text>`;
document.getElementById("assets").innerHTML = a;

const capacity = [[1, 0], [3, 0], [4, 3.6], [5, 4.5], [8, 4.9], [9, 5.2], [13, 5.9], [14, 6.2], [18, 6.9], [19, 8.3], [20, 8.7], [22, 9.8], [24, 12.8], [25, 14], [28, 18.5], [31, 22.6], [32, 22.9], [34, 23.3], [35, 30.5], [36, 31], [39, 32.9], [41, 34.1], [42, 35], [43, 35.7], [45, 37.2], [48, 39.2], [49, 39.8], [53, 42.3], [55, 43.3], [56, 44], [60, 46.4], [65, 49.3], [66, 49.9], [67, 50.5], [70, 52.1], [71, 52.8], [74, 54.4], [76, 55.6], [80, 58], [81, 58.4], [82, 58.9], [84, 59.7], [85, 60], [89, 61.2], [93, 61.8], [94, 62.2], [96, 62.6], [97, 62.6], [101, 63.2], [102, 63.3], [104, 63.5], [106, 63.5], [107, 63.7], [109, 63.7], [110, 63.9], [112, 63.9], [113, 64.1], [120, 64.1]];
let c = `<path d="M279 27H308" stroke="#4472c4" stroke-width="3"/><text class="series" x="309" y="32">Average Facility Capacity Utilized</text>`;
for (let v = 0; v <= 70; v += 10) {
  const y = 478.5 - v * 6.04;
  c += line(40, 792, y) + `<text class="axis" x="30" y="${y + 3}" text-anchor="end">${v}%</text>`;
}
const pts = capacity.map(([m, v]) => `${(43.6 + (m - 1) * 6.28).toFixed(1)},${(478.5 - v * 6.04).toFixed(1)}`).join(" ");
c += `<polyline points="${pts}" fill="none" stroke="#4472c4" stroke-width="3" stroke-linejoin="round" stroke-linecap="round"/>`;
c += months(46, 6.28, 497);
document.getElementById("capacity").innerHTML = c;
```
